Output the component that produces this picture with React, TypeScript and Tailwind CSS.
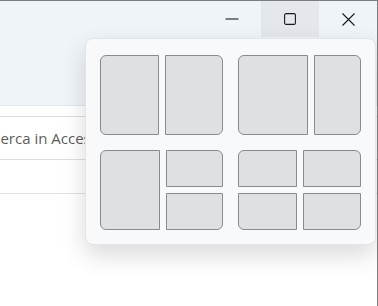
import React from "react";

const tile = "bg-[#dfe0e1] border border-[#8b8b8b]";

function CaptionButtons() {
  return (
    <div className="flex h-[36px]">
      <div className="w-[58px] h-full flex items-center justify-center">
        <svg width="14" height="2" viewBox="0 0 14 2">
          <line x1="0.5" y1="1" x2="13.5" y2="1" stroke="#1a1a1a" strokeWidth="1.1" />
        </svg>
      </div>
      <div className="w-[58px] h-full flex items-center justify-center bg-[#e4e8ed]">
        <svg width="12" height="12" viewBox="0 0 12 12">
          <rect x="0.6" y="0.6" width="10.8" height="10.8" rx="1.5" fill="none" stroke="#1a1a1a" strokeWidth="1.1" />
        </svg>
      </div>
      <div className="w-[58px] h-full flex items-center justify-center">
        <svg width="13" height="13" viewBox="0 0 13 13">
          <path d="M0.5 0.5 L12.5 12.5 M12.5 0.5 L0.5 12.5" stroke="#1a1a1a" strokeWidth="1.1" />
        </svg>
      </div>
    </div>
  );
}

function SnapFlyout() {
  return (
    <div className="absolute left-[85px] top-[37px] w-[291px] h-[207px] rounded-[8px] border border-[#e2e4e7] bg-[#f8f9fa] shadow-[0_10px_24px_rgba(0,0,0,0.15)] px-[14px] pt-[16px] pb-[14px] flex flex-col gap-[15px]">
      <div className="flex gap-[15px] h-[80px]">
        <div className="flex-1 flex gap-[6px]">
          <div className={`${tile} flex-1 rounded-l-[6px]`} />
          <div className={`${tile} flex-1 rounded-r-[6px]`} />
        </div>
        <div className="flex-1 flex gap-[6px]">
          <div className={`${tile} w-[70px] rounded-l-[6px]`} />
          <div className={`${tile} flex-1 rounded-r-[6px]`} />
        </div>
      </div>
      <div className="flex gap-[15px] h-[80px]">
        <div className="flex-1 flex gap-[6px]">
          <div className={`${tile} flex-1 rounded-l-[6px]`} />
          <div className="flex-1 flex flex-col gap-[6px]">
            <div className={`${tile} flex-1 rounded-tr-[6px]`} />
            <div className={`${tile} flex-1 rounded-br-[6px]`} />
          </div>
        </div>
        <div className="flex-1 flex flex-col gap-[6px]">
          <div className="flex-1 flex gap-[6px]">
            <div className={`${tile} flex-1 rounded-tl-[6px]`} />
            <div className={`${tile} flex-1 rounded-tr-[6px]`} />
          </div>
          <div className="flex-1 flex gap-[6px]">
            <div className={`${tile} flex-1 rounded-bl-[6px]`} />
            <div className={`${tile} flex-1 rounded-br-[6px]`} />
          </div>
        </div>
      </div>
    </div>
  );
}

export default function App() {
  return (
    <div
      className="relative w-[378px] h-[306px] overflow-hidden bg-white border-t border-r border-[#7d7d7d]"
      style={{ fontFamily: '"Open Sans", "Noto Sans", sans-serif' }}
    >
      <div className="h-[104px] bg-[#eff4f9] flex justify-end items-start">
        <CaptionButtons />
      </div>
      <div className="border-t border-[#e3e6ea] pt-[10px]">
        <div className="h-[44px] border-y border-[#dedede] flex items-center overflow-hidden">
          <span className="-ml-[9px] text-[15px] text-[#5d5d5d] whitespace-nowrap">
            Cerca in Accesso rapido
          </span>
        </div>
        <div className="h-[34px] border-b border-[#e3e3e3]" />
      </div>
      <SnapFlyout />
    </div>
  );
}
